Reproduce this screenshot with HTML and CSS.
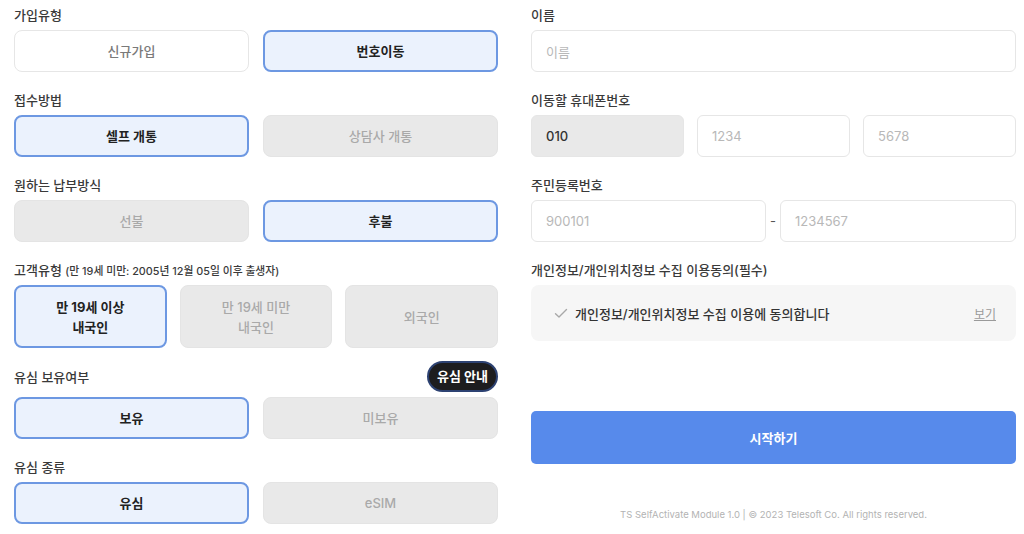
FILE: index.html
```html
<!DOCTYPE html>
<html lang="ko">
<head>
<meta charset="utf-8">
<title>TS SelfActivate</title>
<link rel="stylesheet" href="styles.css">
</head>
<body>
<div class="page">
  <div class="col">
    <section class="sec">
      <div class="label">가입유형</div>
      <div class="opts two">
        <button class="opt white">신규가입</button>
        <button class="opt sel">번호이동</button>
      </div>
    </section>
    <section class="sec">
      <div class="label">접수방법</div>
      <div class="opts two">
        <button class="opt sel">셀프 개통</button>
        <button class="opt off">상담사 개통</button>
      </div>
    </section>
    <section class="sec">
      <div class="label">원하는 납부방식</div>
      <div class="opts two">
        <button class="opt off">선불</button>
        <button class="opt sel">후불</button>
      </div>
    </section>
    <section class="sec">
      <div class="label">고객유형 <span class="sub">(만 19세 미만: 2005년 12월 05일 이후 출생자)</span></div>
      <div class="opts three">
        <button class="opt tall sel">만 19세 이상<br>내국인</button>
        <button class="opt tall off">만 19세 미만<br>내국인</button>
        <button class="opt tall off">외국인</button>
      </div>
    </section>
    <section class="sec sec-pill">
      <div class="label-row">
        <div class="label">유심 보유여부</div>
        <button class="pill">유심 안내</button>
      </div>
      <div class="opts two">
        <button class="opt sel">보유</button>
        <button class="opt off">미보유</button>
      </div>
    </section>
    <section class="sec">
      <div class="label">유심 종류</div>
      <div class="opts two">
        <button class="opt sel">유심</button>
        <button class="opt off">eSIM</button>
      </div>
    </section>
  </div>
  <div class="col">
    <section class="sec">
      <div class="label">이름</div>
      <div class="field ph">이름</div>
    </section>
    <section class="sec">
      <div class="label">이동할 휴대폰번호</div>
      <div class="opts three">
        <div class="field fixed">010</div>
        <div class="field ph">1234</div>
        <div class="field ph">5678</div>
      </div>
    </section>
    <section class="sec">
      <div class="label">주민등록번호</div>
      <div class="rrn">
        <div class="field ph">900101</div>
        <span class="dash">-</span>
        <div class="field ph">1234567</div>
      </div>
    </section>
    <section class="sec agree-sec">
      <div class="label">개인정보/개인위치정보 수집 이용동의(필수)</div>
      <div class="agree">
        <svg class="check" width="14" height="11" viewBox="0 0 14 11"><path d="M1.5 5.8 L5 9 L12.5 1.5" fill="none" stroke="#a8a8a8" stroke-width="1.4" stroke-linecap="round" stroke-linejoin="round"/></svg>
        <span class="agree-text">개인정보/개인위치정보 수집 이용에 동의합니다</span>
        <a class="view">보기</a>
      </div>
    </section>
    <button class="start">시작하기</button>
    <div class="footer">TS SelfActivate Module 1.0 | © 2023 Telesoft Co. All rights reserved.</div>
  </div>
</div>
</body>
</html>
```

FILE: styles.css
```css
* { box-sizing: border-box; }
html, body { margin: 0; background: #ffffff; }
body {
  font-family: Inter, "Noto Sans CJK KR", sans-serif;
  color: #333333;
  padding: 5px 8px 0 14px;
}
.page {
  display: grid;
  grid-template-columns: 484px 485px;
  column-gap: 33px;
}
.col { display: flex; flex-direction: column; }
.sec { margin-bottom: 18px; }
.sec:last-child { margin-bottom: 0; }
.label {
  font-size: 13px;
  font-weight: 500;
  line-height: 20px;
  height: 20px;
  margin-bottom: 5px;
  color: #3a3a3a;
  white-space: nowrap;
}
.sub { font-size: 10.8px; color: #3a3a3a; }
.sec-pill { margin-top: -5px; }
.label-row {
  display: flex;
  justify-content: space-between;
  align-items: center;
  height: 31px;
  margin-bottom: 5px;
}
.label-row .label { margin-bottom: 0; }
.pill {
  height: 31px;
  padding: 0 8px;
  border-radius: 16px;
  background: #1d1d1f;
  border: 2px solid #2d4272;
  color: #ffffff;
  font-family: inherit;
  font-size: 13px;
  font-weight: 700;
  line-height: 1;
}
.opts { display: grid; }
.opts.two { grid-template-columns: 1fr 1fr; column-gap: 14px; }
.opts.three { grid-template-columns: 1fr 1fr 1fr; column-gap: 13px; }
.opt {
  height: 42px;
  border-radius: 8px;
  font-family: inherit;
  font-size: 13px;
  font-weight: 500;
  line-height: 20px;
  padding: 0;
}
.opt.tall { height: 63px; }
.opt.white { background: #ffffff; border: 1px solid #e6e6e6; color: #7a7a7a; }
.opt.off { background: #e9e9e9; border: 1px solid #e4e4e4; color: #a9a9a9; }
.opt.sel { background: #ebf2fd; border: 2px solid #6d98e2; color: #222222; font-weight: 700; }
.field {
  height: 42px;
  border: 1px solid #e6e6e6;
  border-radius: 6px;
  padding: 0 14px;
  display: flex;
  align-items: center;
  font-size: 13px;
  background: #ffffff;
}
.field.ph { color: #b8b8b8; }
.field.fixed { background: #e9e9e9; color: #333333; font-weight: 500; }
.rrn {
  display: grid;
  grid-template-columns: 235px 1fr 236px;
  align-items: center;
}
.dash { text-align: center; font-size: 13px; color: #555555; }
.agree-sec { margin-bottom: 0; }
.agree {
  height: 56px;
  background: #f6f6f6;
  border-radius: 8px;
  display: flex;
  align-items: center;
  padding: 0 20px 0 23px;
  font-size: 13px;
}
.check { margin-right: 7px; flex: none; }
.agree-text { flex: 1; color: #333333; font-weight: 500; }
.view { color: #9a9a9a; text-decoration: underline; font-size: 12px; }
.start {
  margin-top: 70px;
  height: 53px;
  border: none;
  border-radius: 5px;
  background: #578aeb;
  color: #ffffff;
  font-family: inherit;
  font-size: 13px;
  font-weight: 700;
}
.footer {
  margin-top: 44px;
  text-align: center;
  font-size: 9.5px;
  line-height: 14px;
  color: #b3b3b3;
}
```
